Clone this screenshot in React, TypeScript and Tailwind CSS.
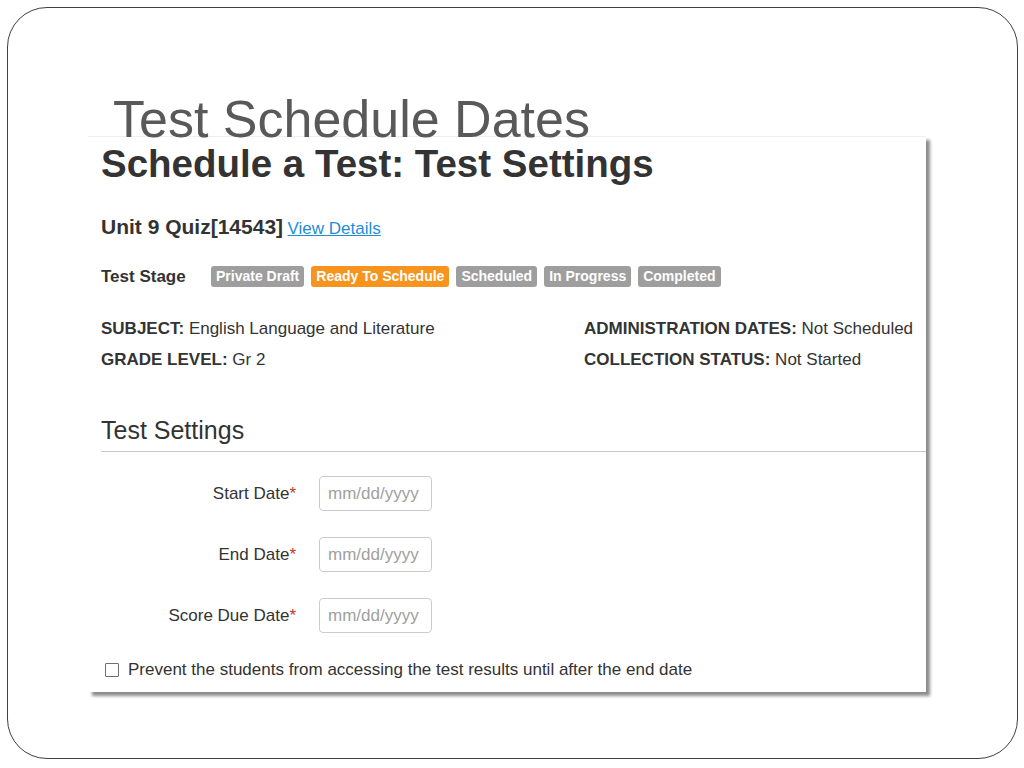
import React from 'react';

const stages = [
    { label: 'Private Draft', active: false },
    { label: 'Ready To Schedule', active: true },
    { label: 'Scheduled', active: false },
    { label: 'In Progress', active: false },
    { label: 'Completed', active: false },
];

const dateFields = ['Start Date', 'End Date', 'Score Due Date'];

const InfoItem = ({ label, value }: { label: string; value: string }) => (
    <div className="h-[24px] leading-[24px] text-[17px] text-[#333333] whitespace-nowrap">
        <span className="font-bold">{label}:</span> {value}
    </div>
);

const App: React.FC = () => {
    return (
        <div className="w-[1024px] h-[768px] bg-white pt-[7px] pl-[7px] overflow-hidden font-['Liberation_Sans',Arial,sans-serif]">
            {/* Slide frame */}
            <div className="w-[1011px] h-[752px] border border-[#404040] rounded-[40px]">
                <h1 className="mt-[94px] ml-[105px] h-[34px] leading-[34px] text-[52px] font-normal text-[#595959] whitespace-nowrap">
                    Test Schedule Dates
                </h1>

                {/* Screenshot panel */}
                <div className="ml-[80px] w-[838px] bg-white border-t border-[#eeeeee] shadow-[4px_4px_3px_rgba(0,0,0,0.45)] pl-[13px] pt-[8px] pb-[10px]">
                    <h2 className="h-[38px] leading-[38px] text-[38.5px] font-bold text-[#333333] whitespace-nowrap">
                        Schedule a Test: Test Settings
                    </h2>

                    <div className="mt-[32px] h-[24px] leading-[24px] whitespace-nowrap">
                        <span className="text-[21px] font-bold text-[#333333]">Unit 9 Quiz[14543]</span>{' '}
                        <a href="#" className="text-[17px] text-[#1f8dd6] underline">View Details</a>
                    </div>

                    <div className="mt-[27px] flex items-center h-[21px]">
                        <span className="w-[110px] text-[17px] font-bold text-[#333333] whitespace-nowrap">Test Stage</span>
                        <div className="flex gap-[7px]">
                            {stages.map((s) => (
                                <span
                                    key={s.label}
                                    className={`h-[21px] leading-[21px] px-[5px] rounded-[3px] text-[14px] font-bold text-white whitespace-nowrap ${s.active ? 'bg-[#f7941e]' : 'bg-[#9e9e9e]'}`}
                                >
                                    {s.label}
                                </span>
                            ))}
                        </div>
                    </div>

                    <div className="mt-[30px] grid grid-cols-[483px_1fr] gap-y-[7px]">
                        <InfoItem label="SUBJECT" value="English Language and Literature" />
                        <InfoItem label="ADMINISTRATION DATES" value="Not Scheduled" />
                        <InfoItem label="GRADE LEVEL" value="Gr 2" />
                        <InfoItem label="COLLECTION STATUS" value="Not Started" />
                    </div>

                    {/* Test Settings section */}
                    <div className="mt-[42px] pb-[5px] border-b border-[#c8c8c8]">
                        <h3 className="h-[32px] leading-[32px] text-[25px] font-normal text-[#333333]">Test Settings</h3>
                    </div>

                    <div className="mt-[24px] flex flex-col gap-[26px]">
                        {dateFields.map((f) => (
                            <div key={f} className="flex items-center">
                                <label className="w-[195px] text-right text-[17px] text-[#333333] whitespace-nowrap">
                                    {f}<span className="text-[#c0392b]">*</span>
                                </label>
                                <input
                                    type="text"
                                    placeholder="mm/dd/yyyy"
                                    className="ml-[23px] w-[113px] h-[35px] px-[8px] border border-[#cccccc] rounded-[4px] text-[17px] text-[#333333] placeholder:text-[#a0a0a0] outline-none"
                                />
                            </div>
                        ))}
                    </div>

                    <label className="mt-[25px] h-[24px] flex items-center gap-[9px] whitespace-nowrap">
                        <span className="ml-[4px] w-[14px] h-[14px] border border-[#6f6f6f] rounded-[1px] bg-white" />
                        <span className="text-[17px] text-[#333333]">
                            Prevent the students from accessing the test results until after the end date
                        </span>
                    </label>
                </div>
            </div>
        </div>
    );
};

export default App;
